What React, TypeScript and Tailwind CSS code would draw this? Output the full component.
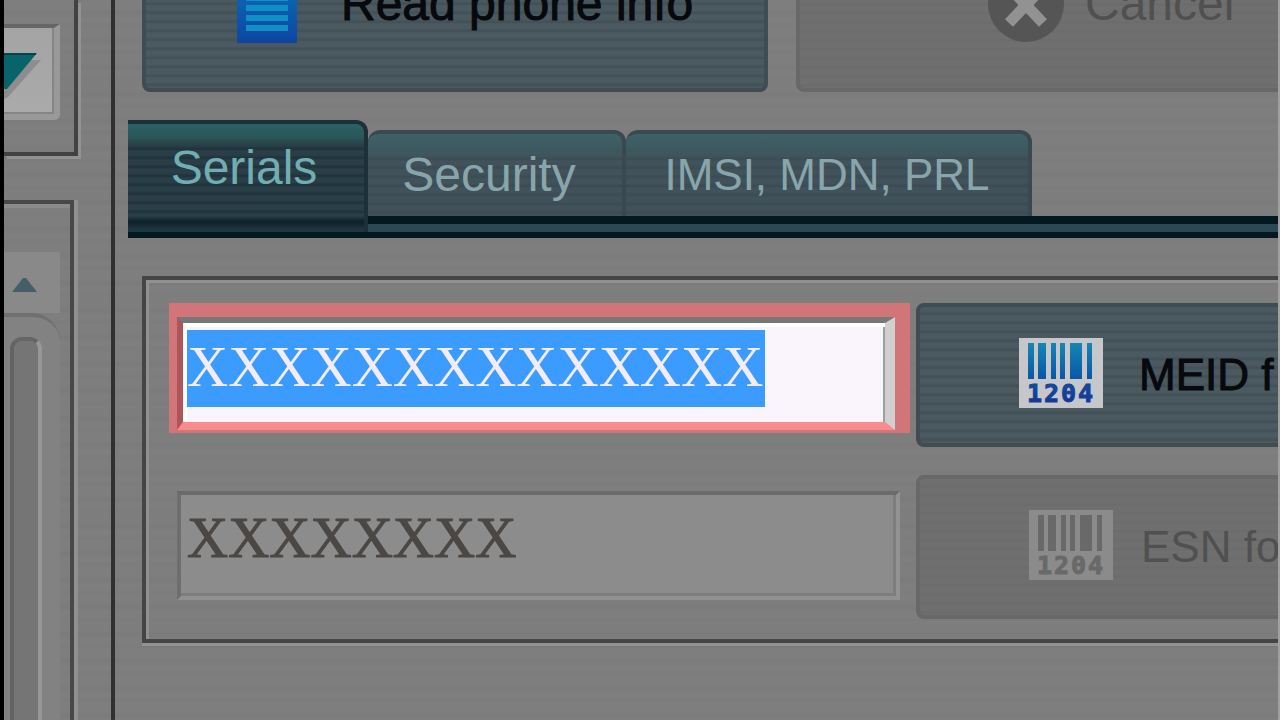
import { useEffect, useRef, useState, type ReactNode } from 'react';
import clsx from 'clsx';

const TABS = [
  { id: 'serials', label: 'Serials' },
  { id: 'security', label: 'Security' },
  { id: 'imsi', label: 'IMSI, MDN, PRL' },
];

function BarcodeIcon({ muted = false }: { muted?: boolean }) {
  const fill = muted ? '#696969' : 'url(#barcode-ink)';
  return (
    <svg width="84" height="70" viewBox="0 0 84 70" className="mb-1 shrink-0" aria-hidden="true">
      <defs>
        <linearGradient id="barcode-ink" gradientUnits="userSpaceOnUse" x1="0" y1="4" x2="0" y2="64">
          <stop offset="0" stopColor="#1687b4" />
          <stop offset="0.55" stopColor="#0a5ca8" />
          <stop offset="1" stopColor="#153791" />
        </linearGradient>
      </defs>
      <rect width="84" height="70" fill={muted ? '#8b8b8b' : '#c5c7cb'} />
      <g fill={fill}>
        <rect x="9" y="5" width="6" height="36" />
        <rect x="19" y="5" width="8" height="36" />
        <rect x="32" y="5" width="5" height="36" />
        <rect x="41" y="5" width="5" height="36" />
        <rect x="51" y="5" width="12" height="36" />
        <rect x="68" y="5" width="5" height="36" />
        <text
          x="8 25 42 59"
          y="64"
          fontFamily="DejaVu Sans Mono, monospace"
          fontWeight="700"
          fontSize="25"
          stroke={muted ? '#696969' : '#17409a'}
          strokeWidth="1"
        >
          1204
        </text>
      </g>
    </svg>
  );
}

function DocumentIcon() {
  return (
    <svg width="60" height="78" viewBox="0 0 60 78" className="shrink-0" aria-hidden="true">
      <defs>
        <linearGradient id="doc" x1="0" y1="0" x2="0" y2="1">
          <stop offset="0" stopColor="#0a78c0" />
          <stop offset="1" stopColor="#0d45a2" />
        </linearGradient>
      </defs>
      <rect width="60" height="78" fill="url(#doc)" />
      {[10, 20, 30, 40, 50, 60].map((y) => (
        <rect key={y} x="9" y={y} width="42" height="6" fill="#108fc6" />
      ))}
    </svg>
  );
}

function CancelIcon() {
  return (
    <svg width="78" height="78" viewBox="0 0 78 78" className="shrink-0" aria-hidden="true">
      <circle cx="39" cy="39" r="38" fill="#555555" />
      <path d="M22 22L56 58M56 22L22 58" stroke="#929292" strokeWidth="11" />
    </svg>
  );
}

function ActionButton({
  children,
  disabled = false,
  className,
}: {
  children: ReactNode;
  disabled?: boolean;
  className?: string;
}) {
  return (
    <button
      type="button"
      disabled={disabled}
      className={clsx(
        'flex h-36 shrink-0 items-center rounded-lg border-4 text-left whitespace-nowrap',
        disabled
          ? 'border-[#686868] bg-[#6d6d6d] bg-[repeating-linear-gradient(180deg,#6f6f6f_0_5px,#6b6b6b_8px,#6f6f6f_9px)] text-[#505050]'
          : 'border-[#3f4c52] bg-[#49565d] bg-[repeating-linear-gradient(180deg,#4b5960_0_4px,#424f56_7px,#4b5960_9px)] text-[#07090d] [-webkit-text-stroke:1px_#07090d]',
        className,
      )}
    >
      {children}
    </button>
  );
}

function Sidebar() {
  return (
    <aside className="flex w-[111px] shrink-0 flex-col border-l-4 border-black">
      <div className="h-[156px] w-[74px] border-r-4 border-b-4 border-[#424242] pt-6 shadow-[3px_3px_0_#929292]">
        <button
          type="button"
          aria-label="Open list"
          className="block h-24 w-14 rounded-br-md border-t-4 border-r-6 border-b-6 border-t-[#666666] border-r-[#999999] border-b-[#999999] bg-linear-to-b from-[#a4a4a4] to-[#aaaaaa] shadow-[inset_-2px_-2px_0_#858585]"
        >
          <svg width="40" height="84" viewBox="0 0 40 84" aria-hidden="true">
            <path d="M0 31L37 31L4 68L0 70Z" fill="#8d8d8d" />
            <path d="M0 24H33L3 60H0Z" fill="#08646a" />
            <path d="M0 25H32" stroke="#06434b" strokeWidth="2" />
          </svg>
        </button>
      </div>
      <div className="mt-11 flex w-[70px] grow flex-col border-t-4 border-r-4 border-[#484848] pt-12 shadow-[4px_0_0_#909090,inset_0_4px_0_#8a8a8a]">
        <button type="button" aria-label="Scroll up" className="flex h-[61px] w-14 items-center bg-[#898989] pt-1 pl-2">
          <svg width="26" height="14" viewBox="0 0 26 14" aria-hidden="true">
            <path d="M0 14L11 0H14L25 14Z" fill="#465e67" />
          </svg>
        </button>
        <div className="w-14 grow rounded-tr-[28px] border-t-4 border-[#707070] bg-[#828282] pt-5 pl-1.5">
          <div className="h-full w-8 rounded-t-xl border-t-4 border-r-4 border-l-4 border-t-[#666666] border-r-[#979797] border-l-[#636363] bg-[#757575]" />
        </div>
      </div>
    </aside>
  );
}

export default function App() {
  const [active, setActive] = useState('serials');
  const meidRef = useRef<HTMLInputElement>(null);

  useEffect(() => {
    meidRef.current?.focus();
    meidRef.current?.select();
  }, []);

  return (
    <div className="flex h-screen overflow-hidden border-r-2 border-[#a0a0a0] bg-[#7d7d7d] bg-[repeating-linear-gradient(180deg,#7e7e7e_0_9px,#7b7b7b_13px,#7f7f7f_19px,#7c7c7c_27px)] font-['Liberation_Sans',Arial,sans-serif]">
      <Sidebar />

      <main className="min-w-0 grow overflow-hidden border-l-4 border-[#303030]">
        {/* Toolbar, scrolled partly out of view */}
        <div className="-mt-[52px] flex gap-7 pl-[27px]">
          <ActionButton className="w-[626px] gap-11 pb-8 pl-[91px] text-[48px]">
            <DocumentIcon />
            <span>Read phone info</span>
          </ActionButton>
          <ActionButton disabled className="w-[626px] gap-5 pb-8 pl-[187px] text-[48px]">
            <CancelIcon />
            <span>Cancel</span>
          </ActionButton>
        </div>

        {/* Tabs */}
        <div role="tablist" className="mt-7 ml-[13px] flex h-24 items-end">
          {TABS.map((tab) => (
            <button
              key={tab.id}
              type="button"
              role="tab"
              aria-selected={active === tab.id}
              onClick={() => setActive(tab.id)}
              className={clsx(
                'relative shrink-0 whitespace-nowrap',
                active === tab.id
                  ? 'z-10 -mb-4 h-28 w-60 rounded-tr-xl border-t-4 border-r-4 border-[#1c3037] bg-[linear-gradient(180deg,#2c6265_0,#2a5558_14px,transparent_22px,transparent_92px,#0b222a_98px,#1f3740_106px),repeating-linear-gradient(180deg,#293e47_0_4px,#1f323b_7px,#293e47_9px)] pr-1 pb-5 text-[#72adb4]'
                  : 'h-[86px] rounded-t-xl border-t-4 border-r-4 border-[#39494f] bg-[linear-gradient(180deg,#3e6267_0,#3d5a61_14px,transparent_24px),repeating-linear-gradient(180deg,#42525a_0_4px,#3b4b53_7px,#42525a_9px)] text-[#88a5ab]',
                tab.id === 'imsi' ? 'w-[406px] text-[44px]' : 'text-[48px]',
                tab.id === 'security' && 'w-[258px] pr-3',
              )}
            >
              {tab.label}
            </button>
          ))}
        </div>
        <div className="ml-[13px] h-[22px] border-t-8 border-b-6 border-[#03191f] bg-[#2b4955]" />

        {/* Serials */}
        <section className="mt-[38px] ml-[27px] w-[1300px] border-t-4 border-b-4 border-l-4 border-[#454545] shadow-[0_3px_0_#929292,inset_3px_3px_0_#909090]">
          <div className="grid grid-cols-[741px_1fr] gap-x-1.5 gap-y-7 pt-[23px] pb-5 pl-[23px]">
            <div className="h-[130px] bg-[#d17578] pt-[14px] pr-[15px] pl-2">
              {/* the blue band is taller than the glyph selection box */}
              <input
                ref={meidRef}
                aria-label="MEID"
                defaultValue="XXXXXXXXXXXXXX"
                className="block h-[113px] w-full border-t-6 border-r-10 border-b-8 border-l-6 border-t-[#777777] border-r-[#d0d0d0] border-b-[#f88b8e] border-l-[#ad5559] bg-[#faf5fc] bg-[linear-gradient(#3c9bff,#3c9bff)] bg-size-[578px_77px] bg-position-[4px_7px] bg-no-repeat px-1 pt-1 pb-4 font-['Liberation_Serif',serif] text-[57px] leading-[76px] text-[#2a2a2a] shadow-[inset_0_4px_0_#ffffff,inset_4px_0_0_#ffffff,inset_-2px_0_0_#a0a0a0] outline-none [-webkit-text-stroke:1px] selection:bg-[#3c9bff] selection:text-[#f2ecfc]"
              />
            </div>
            <ActionButton className="gap-9 pl-[99px] text-[44px]">
              <BarcodeIcon />
              <span>MEID f</span>
            </ActionButton>

            <div className="pt-4 pr-[10px] pl-2">
              <input
                aria-label="ESN"
                readOnly
                defaultValue="XXXXXXXX"
                className="block h-[109px] w-full border-t-4 border-r-4 border-b-4 border-l-4 border-t-[#6b6b6b] border-r-[#929292] border-b-[#909090] border-l-[#6e6e6e] bg-[#8c8c8c] px-1.5 pt-1 pb-5 font-['Liberation_Serif',serif] text-[57px] leading-[76px] text-[#4b4744] shadow-[inset_-3px_-3px_0_#7d7d7d] outline-none [-webkit-text-stroke:1px]"
              />
            </div>
            <ActionButton disabled className="gap-7 pl-[109px] text-[44px]">
              <BarcodeIcon muted />
              <span>ESN fo</span>
            </ActionButton>
          </div>
        </section>
      </main>
    </div>
  );
}
